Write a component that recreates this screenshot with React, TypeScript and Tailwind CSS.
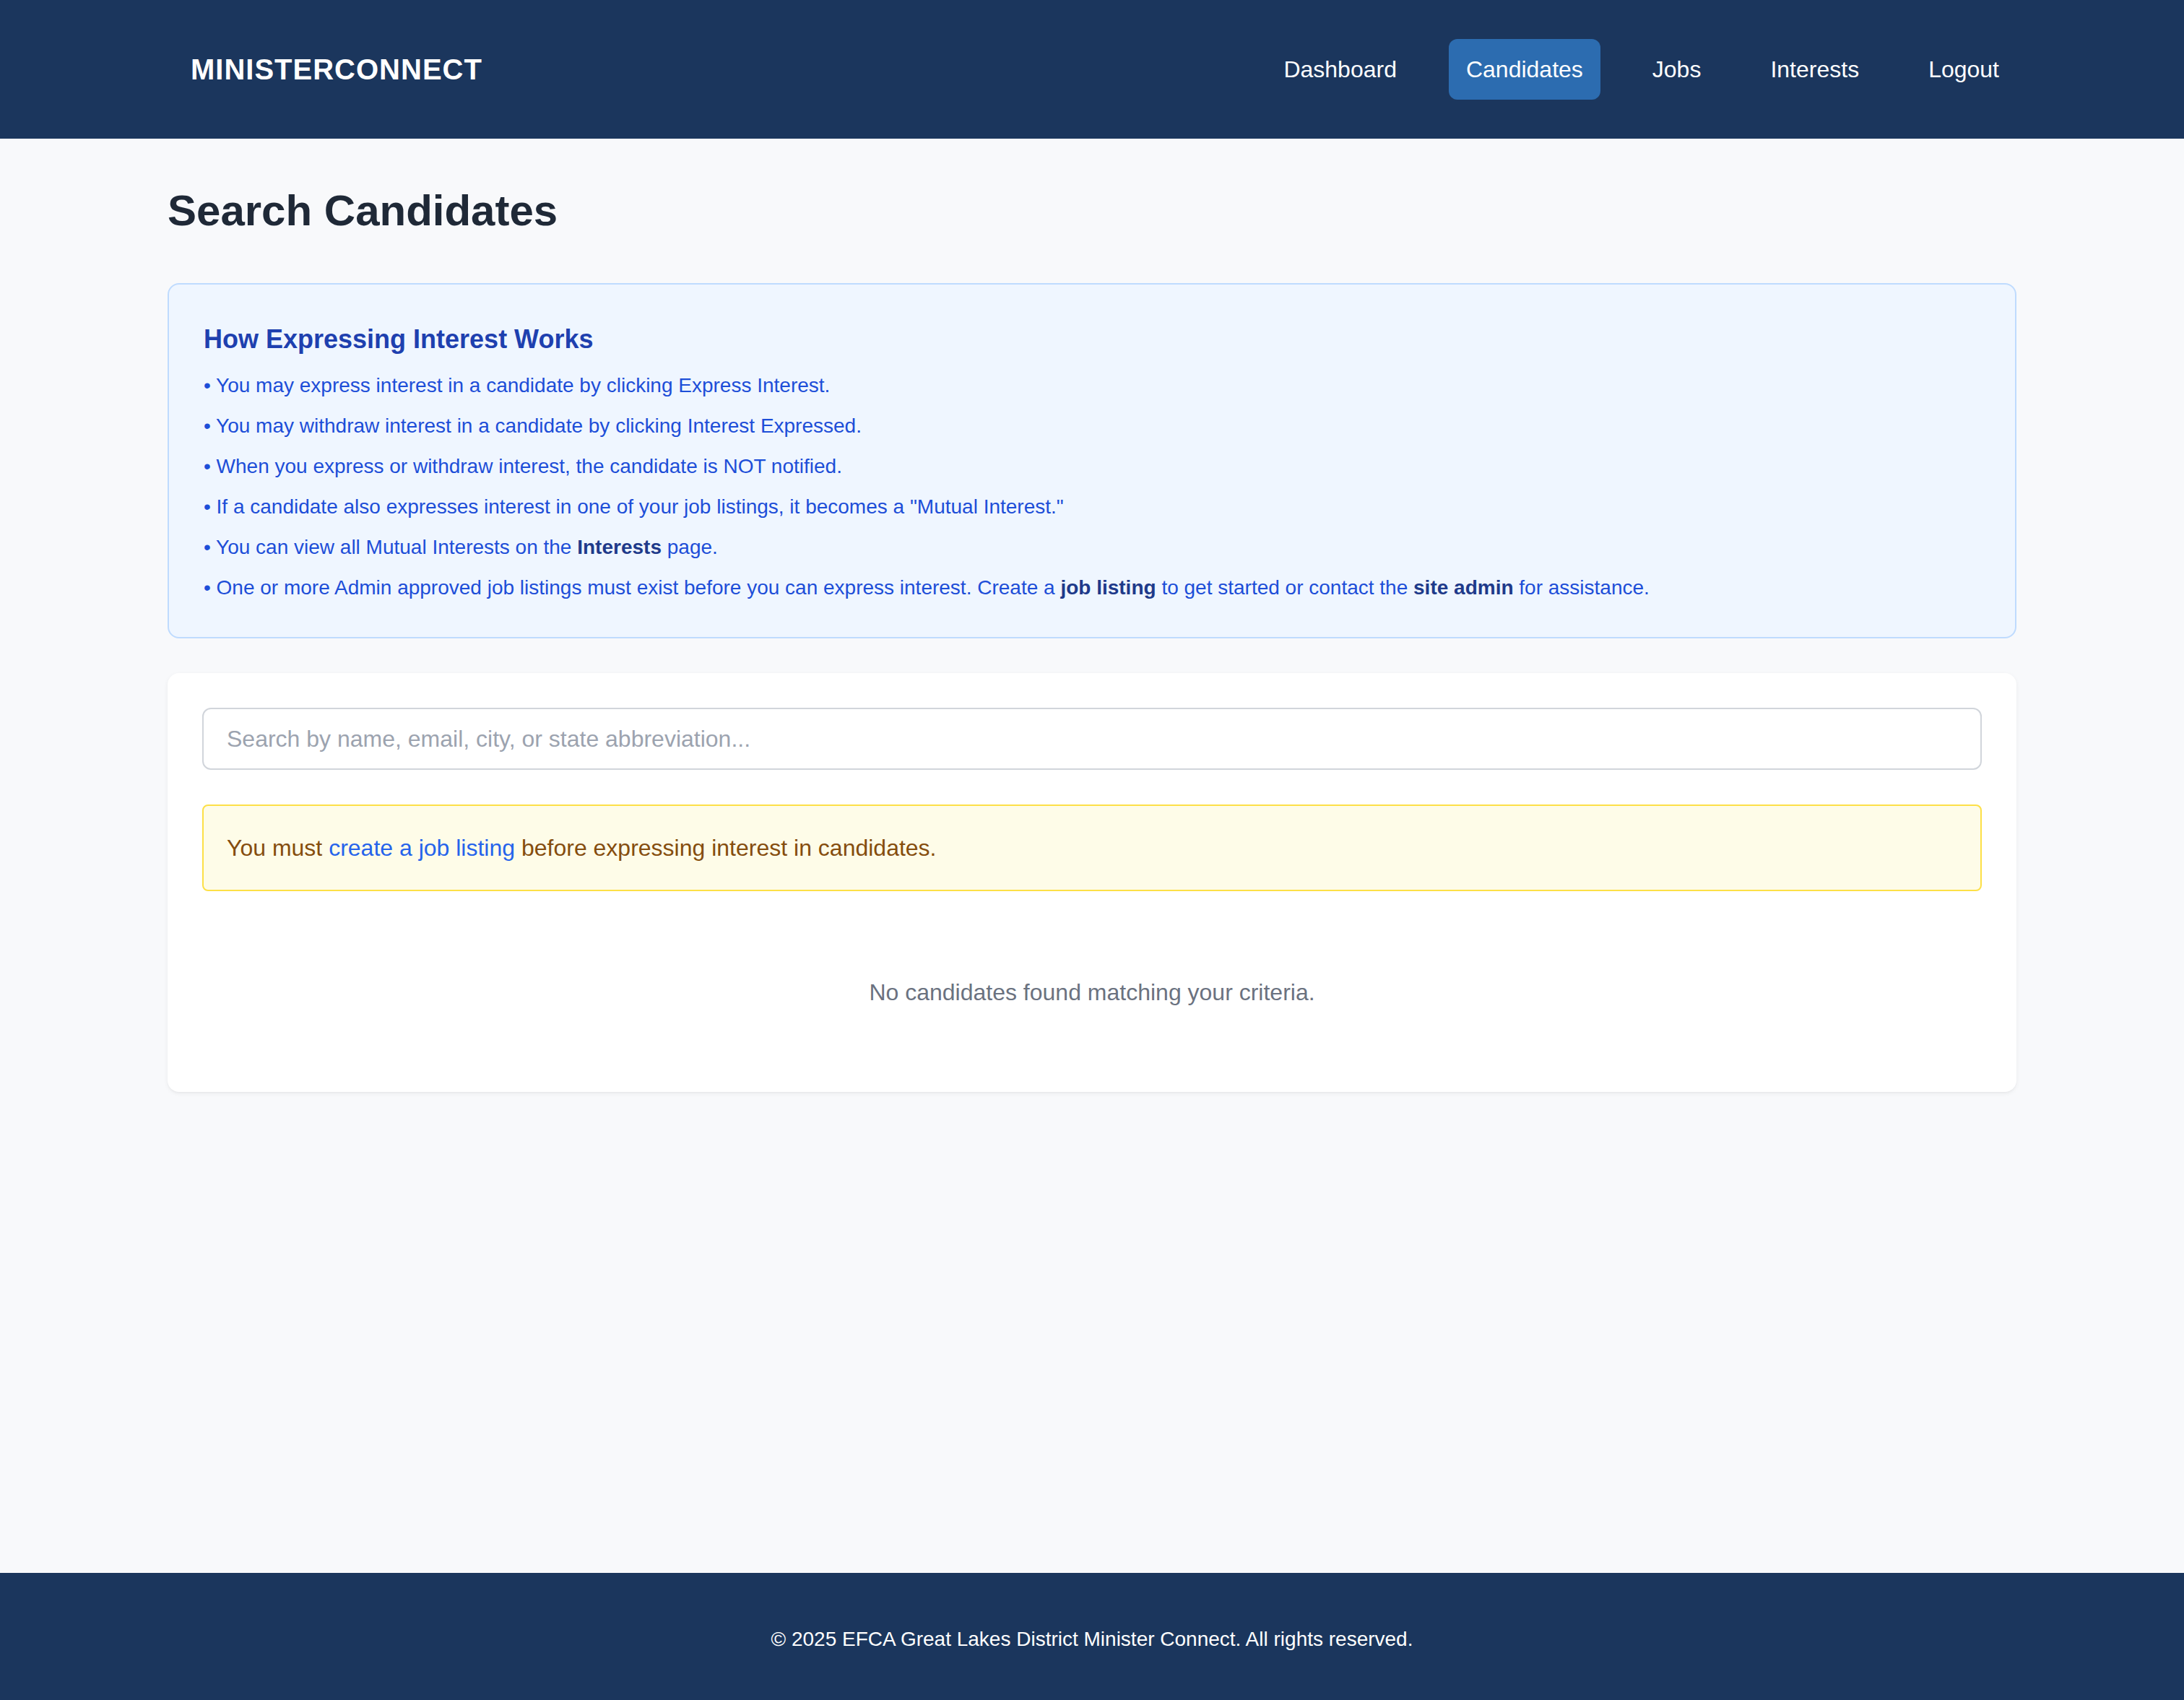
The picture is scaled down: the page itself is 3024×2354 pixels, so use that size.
import { useState } from "react";

const navItems = ["Dashboard", "Candidates", "Jobs", "Interests", "Logout"];

function Header() {
  return (
    <header className="bg-[#1b365d] h-[192px]">
      <div className="max-w-[2560px] mx-auto h-full flex items-center justify-between">
        <span className="pl-8 text-white text-[40px] font-bold tracking-wide">MINISTERCONNECT</span>
        <nav className="flex items-center gap-12">
          {navItems.map((item) => (
            <a
              key={item}
              href="#"
              className={`px-6 py-[18px] rounded-[12px] text-white text-[32px] leading-[48px] ${
                item === "Candidates" ? "bg-[#2c6cb0]" : ""
              }`}
            >
              {item}
            </a>
          ))}
        </nav>
      </div>
    </header>
  );
}

function InfoBox() {
  return (
    <div className="bg-[#eff6ff] border-2 border-[#bfdbfe] rounded-[16px] p-12 mb-12">
      <h2 className="text-[36px] leading-[56px] font-semibold text-[#1e40af] mb-4">How Expressing Interest Works</h2>
      <ul className="flex flex-col gap-4 text-[28px] leading-[40px] text-[#1d4ed8]">
        <li>• You may express interest in a candidate by clicking Express Interest.</li>
        <li>• You may withdraw interest in a candidate by clicking Interest Expressed.</li>
        <li>• When you express or withdraw interest, the candidate is NOT notified.</li>
        <li>• If a candidate also expresses interest in one of your job listings, it becomes a "Mutual Interest."</li>
        <li>
          • You can view all Mutual Interests on the <strong className="font-bold text-[#1e3a8a]">Interests</strong> page.
        </li>
        <li>
          • One or more Admin approved job listings must exist before you can express interest. Create a{" "}
          <strong className="font-bold text-[#1e3a8a]">job listing</strong> to get started or contact the{" "}
          <strong className="font-bold text-[#1e3a8a]">site admin</strong> for assistance.
        </li>
      </ul>
    </div>
  );
}

function SearchCard() {
  const [query, setQuery] = useState("");
  return (
    <div className="bg-white rounded-[16px] p-12 shadow-[0_2px_6px_rgba(0,0,0,0.06),0_2px_4px_-2px_rgba(0,0,0,0.06)]">
      <input
        type="text"
        value={query}
        onChange={(e) => setQuery(e.target.value)}
        placeholder="Search by name, email, city, or state abbreviation..."
        className="w-full mb-12 px-8 py-[17px] border-2 border-[#d1d5db] rounded-[12px] text-[32px] leading-[48px] text-[#1f2937] placeholder:text-[#9ca3af] outline-none"
      />
      <div className="mb-12 px-8 py-[34px] bg-[#fefce8] border-2 border-[#fde047] rounded-[8px] text-[32px] leading-[48px] text-[#854d0e]">
        You must{" "}
        <a href="#" className="text-[#2563eb]">
          create a job listing
        </a>{" "}
        before expressing interest in candidates.
      </div>
      <div className="pt-[68px] pb-[66px] text-center text-[32px] leading-[48px] text-[#6b7280]">
        No candidates found matching your criteria.
      </div>
    </div>
  );
}

export default function App() {
  return (
    <div className="min-h-screen flex flex-col bg-[#f8f9fb] font-['Liberation_Sans',Arial,sans-serif]">
      <Header />
      <main className="flex-1 w-full max-w-[2560px] mx-auto pt-16 pb-16">
        <h1 className="text-[60px] leading-[72px] font-bold text-[#1f2937] mb-16">Search Candidates</h1>
        <InfoBox />
        <SearchCard />
      </main>
      <footer className="bg-[#1b365d] pt-[68px] pb-[60px]">
        <p className="text-center text-white text-[28px] leading-[48px]">
          © 2025 EFCA Great Lakes District Minister Connect. All rights reserved.
        </p>
      </footer>
    </div>
  );
}
